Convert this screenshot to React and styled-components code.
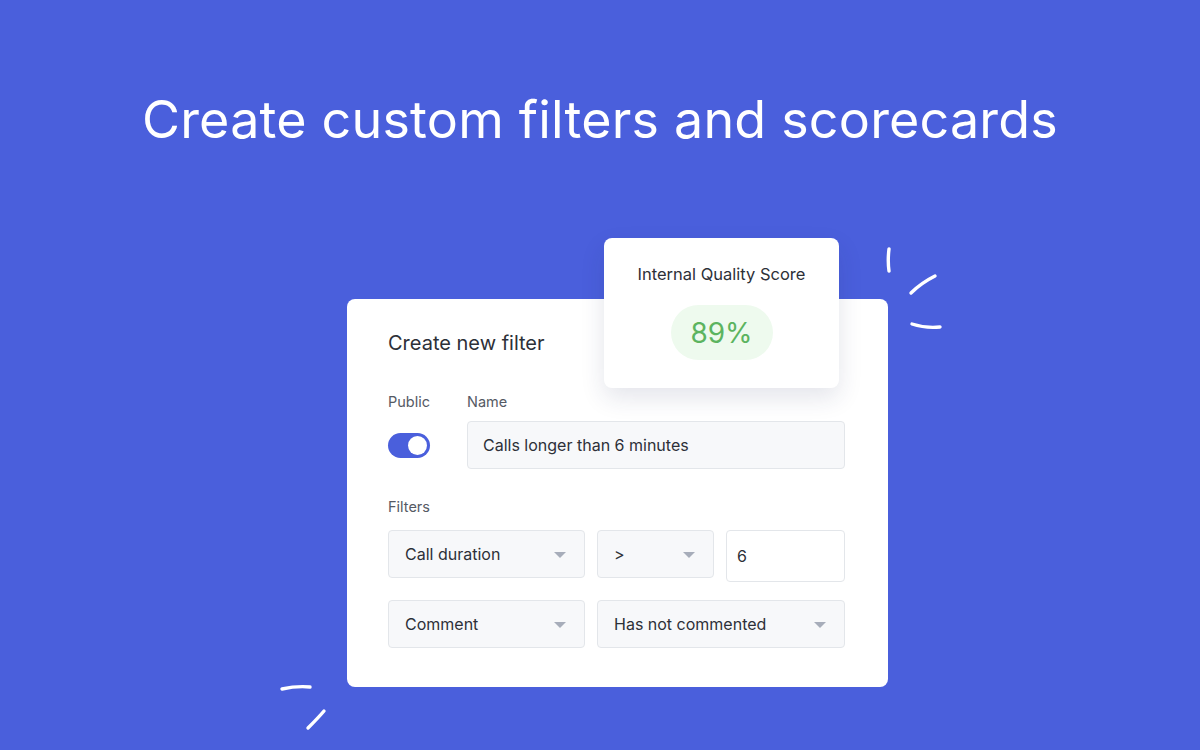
import React from 'react';
import styled, { createGlobalStyle } from 'styled-components';

const GlobalStyle = createGlobalStyle`
  html, body {
    margin: 0;
    padding: 0;
    background: #4a5fdc;
    font-family: Inter, "Noto Sans", sans-serif;
  }
  * {
    box-sizing: border-box;
  }
`;

const Page = styled.div`
  width: 1200px;
  height: 750px;
  background: #4a5fdc;
  overflow: hidden;
  display: flex;
  flex-direction: column;
`;

const Headline = styled.h1`
  margin: 86px 0 0;
  text-align: center;
  color: #fff;
  font-size: 52px;
  font-weight: 400;
  line-height: 68px;
  letter-spacing: 0.2px;
`;

const Stage = styled.div`
  padding: 145px 0 0 347px;
`;

const CardWrap = styled.div`
  position: relative;
  width: 541px;
`;

const Card = styled.div`
  background: #fff;
  border-radius: 8px;
  padding: 31px 43px 39px 41px;
`;

const CardTitle = styled.h2`
  margin: 0;
  font-size: 20px;
  font-weight: 400;
  line-height: 26px;
  color: #2d3038;
`;

const NameGrid = styled.div`
  display: grid;
  grid-template-columns: 79px 1fr;
  margin-top: 37px;
  row-gap: 11px;
  align-items: center;
`;

const Label = styled.div`
  font-size: 14.5px;
  line-height: 17px;
  color: #555a64;
`;

const Toggle = styled.div`
  width: 42px;
  height: 25px;
  border-radius: 13px;
  background: #4a5fdc;
  display: flex;
  align-items: center;
  justify-content: flex-end;
  padding-right: 3px;
`;

const Knob = styled.div`
  width: 19px;
  height: 19px;
  border-radius: 50%;
  background: #fff;
`;

const Field = styled.div`
  height: ${p => p.$h || 48}px;
  border: 1px solid #e3e6ea;
  border-radius: 4px;
  background: ${p => (p.$white ? '#fff' : '#f7f8fa')};
  display: flex;
  align-items: center;
  justify-content: space-between;
  padding: 0 18px 0 ${p => p.$pl || 16}px;
  font-size: 16px;
  color: #2d3038;
`;

const FiltersLabel = styled(Label)`
  margin-top: 29px;
`;

const Row = styled.div`
  display: grid;
  grid-template-columns: ${p => p.$cols};
  column-gap: 12px;
  align-items: start;
  margin-top: ${p => p.$mt}px;
`;

const Caret = styled.span`
  width: 0;
  height: 0;
  border-left: 6px solid transparent;
  border-right: 6px solid transparent;
  border-top: 6px solid #a7adba;
  margin-top: 2px;
`;

const ScoreCard = styled.div`
  position: absolute;
  left: 257px;
  top: -61px;
  width: 235px;
  height: 150px;
  background: #fff;
  border-radius: 8px;
  box-shadow: 0 10px 24px rgba(30, 40, 90, 0.12);
  display: flex;
  flex-direction: column;
  align-items: center;
  padding-top: 25px;
`;

const ScoreTitle = styled.div`
  font-size: 16.5px;
  line-height: 22px;
  color: #2d3038;
`;

const ScorePill = styled.div`
  margin-top: 20px;
  width: 102px;
  height: 55px;
  border-radius: 28px;
  background: #eefaee;
  color: #5cb460;
  font-size: 28px;
  display: flex;
  align-items: center;
  justify-content: center;
`;

const Strokes = styled.svg`
  position: absolute;
  left: ${p => p.$x}px;
  top: ${p => p.$y}px;
  overflow: visible;
`;

const Select = ({ children }) => (
  <Field>
    <span>{children}</span>
    <Caret />
  </Field>
);

export default function App() {
  return (
    <Page>
      <GlobalStyle />
      <Headline>Create custom filters and scorecards</Headline>
      <Stage>
        <CardWrap>
          <Card>
            <CardTitle>Create new filter</CardTitle>
            <NameGrid>
              <Label>Public</Label>
              <Label>Name</Label>
              <Toggle>
                <Knob />
              </Toggle>
              <Field $pl={15}>Calls longer than 6 minutes</Field>
            </NameGrid>
            <FiltersLabel>Filters</FiltersLabel>
            <Row $cols="197px 117px 1fr" $mt={15}>
              <Select>Call duration</Select>
              <Select>&gt;</Select>
              <Field $white $h={52} $pl={10}>6</Field>
            </Row>
            <Row $cols="197px 1fr" $mt={18}>
              <Select>Comment</Select>
              <Select>Has not commented</Select>
            </Row>
          </Card>
          <ScoreCard>
            <ScoreTitle>Internal Quality Score</ScoreTitle>
            <ScorePill>89%</ScorePill>
          </ScoreCard>
          <Strokes $x={530} $y={-56} width="70" height="95" viewBox="0 0 70 95" fill="none" stroke="#fff" strokeWidth="3.4" strokeLinecap="round">
            <path d="M12 6 C11 14 11 21 12 28" />
            <path d="M34 50 C41 43 48 38 58 33" />
            <path d="M35 81 C44 84 53 85 63 84" />
          </Strokes>
          <Strokes $x={-68} $y={385} width="65" height="50" viewBox="0 0 65 50" fill="none" stroke="#fff" strokeWidth="3.4" strokeLinecap="round">
            <path d="M3 5 C12 3 21 2 31 3" />
            <path d="M29 44 C35 38 40 33 45 27" />
          </Strokes>
        </CardWrap>
      </Stage>
    </Page>
  );
}
